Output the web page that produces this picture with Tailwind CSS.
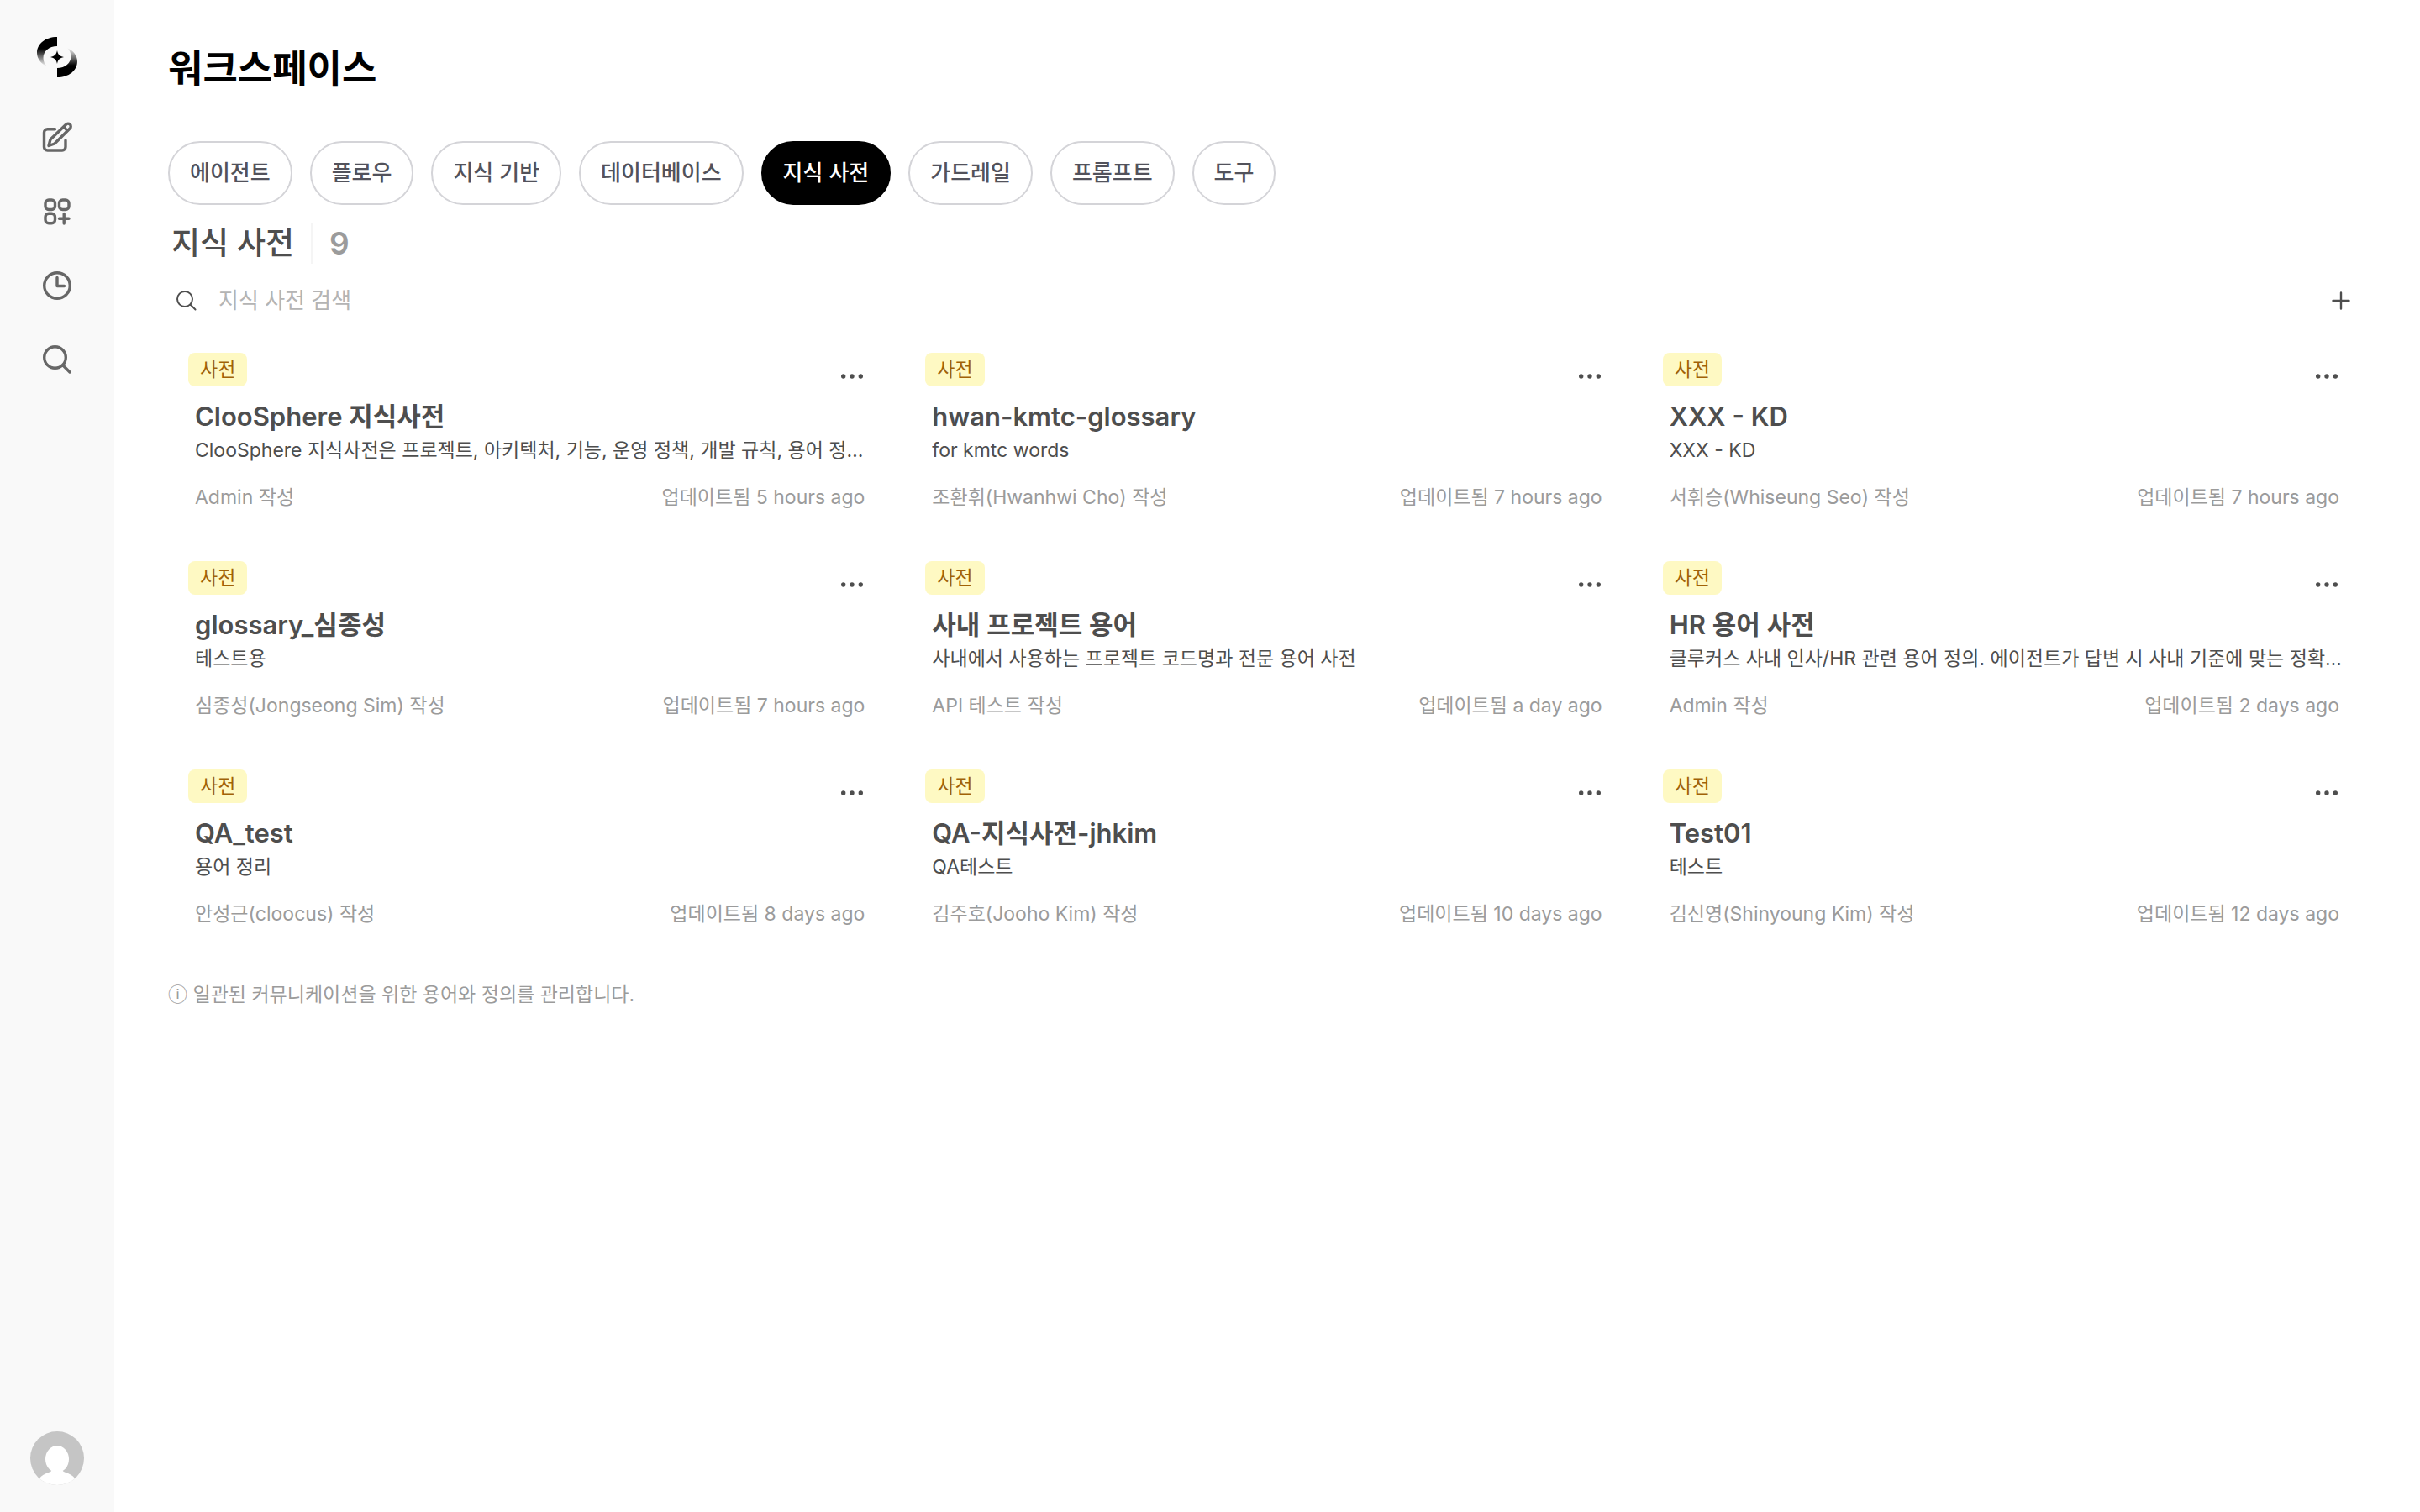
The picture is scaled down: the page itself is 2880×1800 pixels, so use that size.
<!DOCTYPE html>
<html lang="ko">
<head>
    <meta charset="UTF-8">
    <meta name="viewport" content="width=device-width, initial-scale=1.0">
    <title>워크스페이스</title>
    <script src="https://cdn.jsdelivr.net/npm/@tailwindcss/browser@4"></script>
</head>
<body class="bg-white text-[#4e4e4e] font-['Inter','Noto_Sans_CJK_KR',sans-serif]">
<div class="flex min-h-screen">
    <!-- Sidebar -->
    <aside class="w-[136px] shrink-0 bg-[#f9f9f9] flex flex-col items-center pt-11 pb-8">
        <a href="#" aria-label="홈">
            <svg class="size-12" viewBox="0 0 48 48" fill="none">
                <defs>
                    <linearGradient id="fade" x1="0" y1="14" x2="0" y2="35" gradientUnits="userSpaceOnUse">
                        <stop offset="0" stop-color="#000" />
                        <stop offset="1" stop-color="#000" stop-opacity="0" />
                    </linearGradient>
                </defs>
                <path id="logo-arc" fill="url(#fade)" d="M24 0C10 0 0 8 0 19c0 7 5 13 12 16C9 32 7.5 29 7.5 25c0-8 7-14 16.5-14z" />
                <use href="#logo-arc" transform="rotate(180 24 24)" />
                <path fill="#000" d="M24 16c1 5 3 7 8 8-5 1-7 3-8 8-1-5-3-7-8-8 5-1 7-3 8-8z" />
            </svg>
        </a>
        <nav class="flex flex-col gap-12 mt-13 text-[#676767]">
            <a href="#" aria-label="새 채팅">
                <svg class="size-10" viewBox="0 0 40 40" fill="none" stroke="currentColor" stroke-width="3.4" stroke-linecap="round" stroke-linejoin="round">
                    <path d="M17.500 9.700H8.500a4 4 0 0 0-4 4V31a4 4 0 0 0 4 4H26a4 4 0 0 0 4-4v-8" />
                    <path d="M10 29.500l2-7.500L30.500 4.200a3.200 3.200 0 0 1 4.800 4.600L17 27z" />
                    <path d="M28.500 7.500l3.500 4" />
                </svg>
            </a>
            <a href="#" aria-label="워크스페이스">
                <svg class="size-10" viewBox="0 0 40 40" fill="none" stroke="currentColor" stroke-width="3.4" stroke-linecap="round">
                    <rect x="6" y="6" width="11.5" height="11.5" rx="4" />
                    <rect x="22.5" y="6" width="11.5" height="11.5" rx="4" />
                    <rect x="6" y="22.3" width="11.5" height="11.5" rx="4" />
                    <path d="M28.200 22.500v11.500M22.500 28.200H34" />
                </svg>
            </a>
            <a href="#" aria-label="기록">
                <svg class="size-10" viewBox="0 0 40 40" fill="none" stroke="currentColor" stroke-width="3.4" stroke-linecap="round" stroke-linejoin="round">
                    <circle cx="20" cy="20" r="15.3" />
                    <path d="M20 10.500v10h8.500" />
                </svg>
            </a>
            <a href="#" aria-label="검색">
                <svg class="size-10" viewBox="0 0 40 40" fill="none" stroke="currentColor" stroke-width="3.4" stroke-linecap="round">
                    <circle cx="17.5" cy="17.5" r="12.8" />
                    <path d="M27 27l8 8" />
                </svg>
            </a>
        </nav>
        <button type="button" class="mt-auto size-16 rounded-full overflow-hidden" aria-label="사용자 메뉴">
            <svg class="size-16" viewBox="0 0 64 64">
                <rect width="64" height="64" fill="#c5c5c5" />
                <ellipse cx="32" cy="33" rx="14" ry="16" fill="#fff" />
                <path fill="#fff" d="M26 45c0 3-3 3.500-7 5-5 2-8 5-10 9v5h46v-5c-2-4-5-7-10-9-4-1.500-7-2-7-5z" />
            </svg>
        </button>
    </aside>

    <main class="flex-1 min-w-0 px-16 pt-[50px]">
        <h1 class="text-[45px] leading-[64px] font-bold text-black">워크스페이스</h1>

        <nav class="flex gap-[21px] mt-[54px] text-[26px] leading-9 font-medium text-[#52525b]">
            <a href="#" class="rounded-full border-2 border-[#d4d4d8] px-6 py-[18px]">에이전트</a>
            <a href="#" class="rounded-full border-2 border-[#d4d4d8] px-6 py-[18px]">플로우</a>
            <a href="#" class="rounded-full border-2 border-[#d4d4d8] px-6 py-[18px]">지식 기반</a>
            <a href="#" class="rounded-full border-2 border-[#d4d4d8] px-6 py-[18px]">데이터베이스</a>
            <a href="#" class="rounded-full border-2 border-black bg-black text-white px-6 py-[18px]" aria-current="page">지식 사전</a>
            <a href="#" class="rounded-full border-2 border-[#d4d4d8] px-6 py-[18px]">가드레일</a>
            <a href="#" class="rounded-full border-2 border-[#d4d4d8] px-6 py-[18px]">프롬프트</a>
            <a href="#" class="rounded-full border-2 border-[#d4d4d8] px-6 py-[18px]">도구</a>
        </nav>

        <div class="flex items-center mt-[22px] pl-1 text-[37px] leading-[48px] font-medium">
            <h2>지식 사전</h2>
            <div class="w-[2px] h-12 bg-[#f5f5f5] mx-5"></div>
            <span class="text-[#9b9b9b] font-semibold">9</span>
        </div>

        <div class="flex items-center h-12 mt-5 pl-2 pr-4">
            <label for="glossary-search">
                <svg class="size-7" viewBox="0 0 28 28" fill="none" stroke="currentColor" stroke-width="2" stroke-linecap="round">
                    <circle cx="12" cy="12" r="9" />
                    <path d="M18.500 18.500l6 6" />
                </svg>
            </label>
            <input id="glossary-search" type="text" placeholder="지식 사전 검색"
                class="flex-1 ml-6 text-[26px] leading-10 outline-none placeholder:text-[#b4b4b4]">
            <button type="button" aria-label="추가">
                <svg class="size-7" viewBox="0 0 28 28" fill="none" stroke="currentColor" stroke-width="2.4" stroke-linecap="round">
                    <path d="M14 4.500v19M4.500 14h19" />
                </svg>
            </button>
        </div>

        <div id="glossary-list" class="grid grid-cols-3 gap-x-4 gap-y-2 mt-[14px]"></div>

        <p class="mt-9 text-[23px] leading-8 text-[#9b9b9b]">ⓘ 일관된 커뮤니케이션을 위한 용어와 정의를 관리합니다.</p>
    </main>
</div>

<script>
    const glossaries = [
        { name: 'ClooSphere 지식사전', description: 'ClooSphere 지식사전은 프로젝트, 아키텍처, 기능, 운영 정책, 개발 규칙, 용어 정…', author: 'Admin', updated: '5 hours ago' },
        { name: 'hwan-kmtc-glossary', description: 'for kmtc words', author: '조환휘(Hwanhwi Cho)', updated: '7 hours ago' },
        { name: 'XXX - KD', description: 'XXX - KD', author: '서휘승(Whiseung Seo)', updated: '7 hours ago' },
        { name: 'glossary_심종성', description: '테스트용', author: '심종성(Jongseong Sim)', updated: '7 hours ago' },
        { name: '사내 프로젝트 용어', description: '사내에서 사용하는 프로젝트 코드명과 전문 용어 사전', author: 'API 테스트', updated: 'a day ago' },
        { name: 'HR 용어 사전', description: '클루커스 사내 인사/HR 관련 용어 정의. 에이전트가 답변 시 사내 기준에 맞는 정확…', author: 'Admin', updated: '2 days ago' },
        { name: 'QA_test', description: '용어 정리', author: '안성근(cloocus)', updated: '8 days ago' },
        { name: 'QA-지식사전-jhkim', description: 'QA테스트', author: '김주호(Jooho Kim)', updated: '10 days ago' },
        { name: 'Test01', description: '테스트', author: '김신영(Shinyoung Kim)', updated: '12 days ago' }
    ];

    document.getElementById('glossary-list').innerHTML = glossaries.map(item => `
        <article class="h-60 min-w-0 px-6 pt-6">
            <div class="flex justify-between">
                <span class="h-10 px-[14px] rounded-lg bg-[#fef9c3] text-[#a16207] text-[23px] leading-10">사전</span>
                <button type="button" class="mt-2 mr-[3px]" aria-label="더보기">
                    <svg class="size-10" viewBox="0 0 40 40" fill="currentColor">
                        <circle cx="9.7" cy="20" r="2.7" />
                        <circle cx="20" cy="20" r="2.7" />
                        <circle cx="30.3" cy="20" r="2.7" />
                    </svg>
                </button>
            </div>
            <div class="px-2">
                <h3 class="mt-2 text-[31px] leading-10 font-semibold truncate">${item.name}</h3>
                <p class="mt-1 -mr-2 text-[23px] leading-8 truncate">${item.description}</p>
                <div class="flex justify-between mt-6 text-[23px] leading-8 text-[#9b9b9b]">
                    <span>${item.author} 작성</span>
                    <span>업데이트됨 ${item.updated}</span>
                </div>
            </div>
        </article>`).join('');
</script>
</body>
</html>
